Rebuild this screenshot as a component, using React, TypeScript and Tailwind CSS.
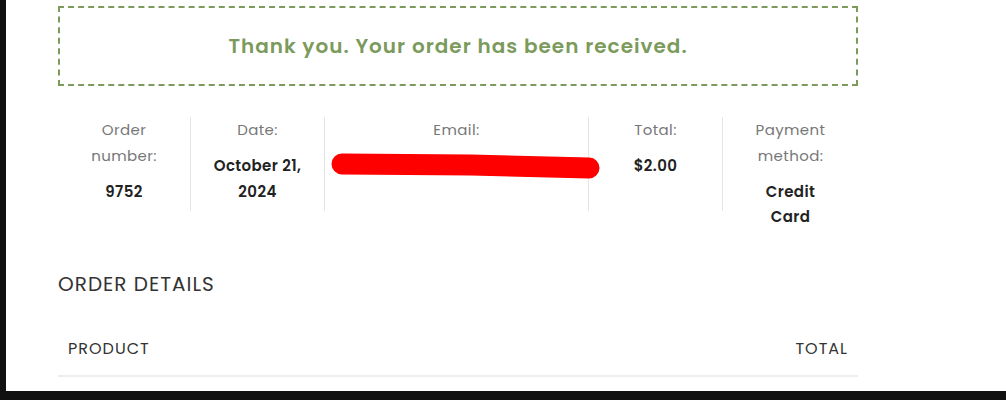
const font = { fontFamily: '"Poppins", "Open Sans", sans-serif' };

export default function App() {
  return (
    <div className="bg-[#111] h-[400px] w-[1006px] pl-[6px] pb-[9px]" style={font}>
      <div className="bg-white h-full pl-[52px] overflow-hidden">
        <div className="w-[800px]">
          {/* Notice */}
          <div className="mt-[6px] h-[80px] border-2 border-dashed border-[#7b9a5c] flex items-center justify-center">
            <p className="text-[20px] font-semibold text-[#7b9a5c] tracking-[1px]">
              Thank you. Your order has been received.
            </p>
          </div>

          {/* Overview */}
          <ul className="mt-[31px] flex text-center text-[15px] tracking-[0.4px]">
            <li className="w-[133px] h-[94px] border-r border-[#e5e5e5] px-3">
              <div className="text-[#777] leading-[26px]">Order number:</div>
              <div className="mt-[10px] font-semibold text-[#222] leading-[26px]">9752</div>
            </li>
            <li className="w-[134px] h-[94px] border-r border-[#e5e5e5] px-2">
              <div className="text-[#777] leading-[26px]">Date:</div>
              <div className="mt-[10px] font-semibold text-[#222] leading-[26px]">
                October 21, 2024
              </div>
            </li>
            <li className="relative w-[264px] h-[94px] border-r border-[#e5e5e5] px-3">
              <div className="text-[#777] leading-[26px]">Email:</div>
              <svg
                className="absolute left-[6px] top-[36px]"
                width="280"
                height="30"
                viewBox="0 0 280 30"
              >
                <path
                  d="M11 11 L140 12 L258 15"
                  stroke="#ff0000"
                  strokeWidth="21"
                  strokeLinecap="round"
                  fill="none"
                />
              </svg>
            </li>
            <li className="w-[134px] h-[94px] border-r border-[#e5e5e5] px-3">
              <div className="text-[#777] leading-[26px]">Total:</div>
              <div className="mt-[10px] font-semibold text-[#222] leading-[26px]">$2.00</div>
            </li>
            <li className="w-[135px] h-[94px] px-7">
              <div className="text-[#777] leading-[26px]">Payment method:</div>
              <div className="mt-[10px] font-semibold text-[#222] leading-[25px]">
                Credit Card
              </div>
            </li>
          </ul>

          {/* Order details */}
          <h2 className="mt-[58px] text-[20px] uppercase text-[#333] leading-[30px] tracking-[1px]">
            Order details
          </h2>
          <div className="mt-[38px] flex justify-between px-[10px] pb-[14px] border-b-2 border-[#eee] text-[16px] text-[#333] uppercase leading-[24px] tracking-[1px]">
            <span>Product</span>
            <span>Total</span>
          </div>
        </div>
      </div>
    </div>
  );
}
